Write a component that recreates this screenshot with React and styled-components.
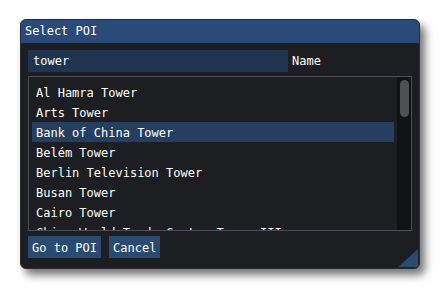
import React from "react";
import styled, { createGlobalStyle } from "styled-components";

const Global = createGlobalStyle`
  html, body { margin: 0; padding: 0; background: #ffffff; }
  body { font-family: "DejaVu Sans Mono", "Liberation Mono", monospace; }
  * { box-sizing: border-box; }
`;

const Stage = styled.div`
  width: 440px;
  height: 290px;
  padding: 19px 0 0 20px;
`;

const Window = styled.div`
  position: relative;
  width: 400px;
  height: 250px;
  background: #1d1e21;
  border: 1px solid #2c2d33;
  border-radius: 6px;
  box-shadow: 5px 6px 9px rgba(0, 0, 0, 0.55);
  overflow: hidden;
  display: flex;
  flex-direction: column;
  color: #ffffff;
  font-size: 12px;
`;

const TitleBar = styled.div`
  height: 22px;
  background: #2a4a7a;
  display: flex;
  align-items: center;
  padding-left: 4px;
  line-height: 1;
  margin-top: -1px;
  margin-left: -1px;
  margin-right: -1px;
  height: 24px;
  padding-left: 5px;
`;

const Body = styled.div`
  flex: 1;
  display: flex;
  flex-direction: column;
  padding: 7px 7px 0 7px;
`;

const SearchRow = styled.div`
  display: flex;
  align-items: center;
  gap: 4px;
  height: 22px;
`;

const SearchInput = styled.div`
  width: 260px;
  height: 22px;
  background: #203350;
  display: flex;
  align-items: center;
  padding-left: 5px;
`;

const Label = styled.span`
  color: #ffffff;
`;

const ListBox = styled.div`
  margin-top: 4px;
  height: 155px;
  border: 1px solid #4b4c55;
  display: flex;
  overflow: hidden;
`;

const Rows = styled.div`
  flex: 1;
  padding: 5px 0 0 3px;
  overflow: hidden;
`;

const Row = styled.div`
  height: 20px;
  display: flex;
  align-items: center;
  padding-left: 4px;
  padding-top: 2px;
  white-space: nowrap;
  background: ${(p) => (p.$selected ? "#263f60" : "transparent")};
`;

const Scrollbar = styled.div`
  width: 14px;
  margin-left: 3px;
  background: #111213;
  padding: 3px 2px 0 3px;
`;

const Grab = styled.div`
  width: 9px;
  height: 37px;
  border-radius: 5px;
  background: #4f5052;
`;

const Buttons = styled.div`
  display: flex;
  gap: 8px;
  margin-top: 5px;
`;

const Button = styled.div`
  height: 22px;
  background: #2b4a70;
  display: flex;
  align-items: center;
  padding: 2px 4px 0 4px;
`;

const Grip = styled.svg`
  position: absolute;
  right: 0;
  bottom: 0;
`;

const items = [
  "Al Hamra Tower",
  "Arts Tower",
  "Bank of China Tower",
  "Belém Tower",
  "Berlin Television Tower",
  "Busan Tower",
  "Cairo Tower",
  "China World Trade Center Tower III",
];

export default function App() {
  return (
    <Stage>
      <Global />
      <Window>
        <TitleBar>Select POI</TitleBar>
        <Body>
          <SearchRow>
            <SearchInput>tower</SearchInput>
            <Label>Name</Label>
          </SearchRow>
          <ListBox>
            <Rows>
              {items.map((t, i) => (
                <Row key={t} $selected={i === 2}>
                  {t}
                </Row>
              ))}
            </Rows>
            <Scrollbar>
              <Grab />
            </Scrollbar>
          </ListBox>
          <Buttons>
            <Button>Go to POI</Button>
            <Button>Cancel</Button>
          </Buttons>
        </Body>
        <Grip width="22" height="20" viewBox="0 0 22 20">
          <polygon points="1,19 21,19 21,1" fill="#2b4a70" />
        </Grip>
      </Window>
    </Stage>
  );
}
